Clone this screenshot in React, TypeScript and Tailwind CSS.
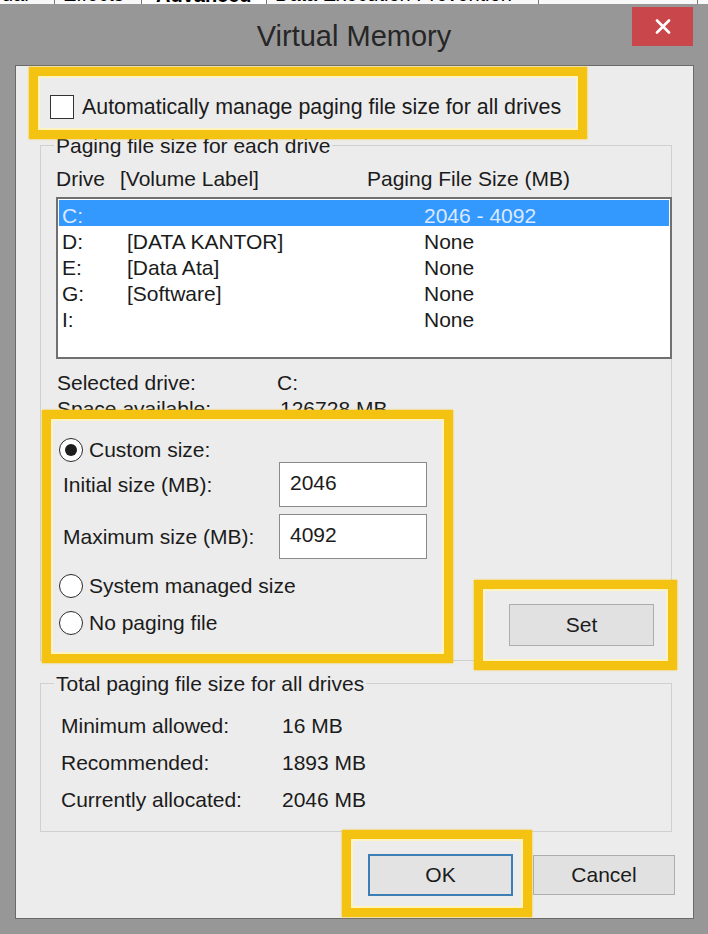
import React from "react";

const Yellow = ({ cls }: { cls: string }) => (
  <div
    className={
      "absolute pointer-events-none border-[9px] border-[#f4c211] shadow-[inset_0_0_0_2px_#fff3bf,0_0_2px_#f4c211] " +
      cls
    }
  />
);

const Radio = ({ checked }: { checked?: boolean }) => (
  <div className="w-[24px] h-[24px] rounded-full border-[1.5px] border-[#2a2a2a] bg-white flex items-center justify-center shrink-0">
    {checked && <div className="w-[12px] h-[12px] rounded-full bg-[#1e1e1e]" />}
  </div>
);

const drives = [
  { d: "C:", l: "", s: "2046 - 4092", sel: true },
  { d: "D:", l: "[DATA KANTOR]", s: "None" },
  { d: "E:", l: "[Data Ata]", s: "None" },
  { d: "G:", l: "[Software]", s: "None" },
  { d: "I:", l: "", s: "None" },
];

export default function App() {
  return (
    <div className="w-[708px] h-[934px] bg-[#979797] relative overflow-hidden font-['Liberation_Sans',Arial,sans-serif] text-[21px] text-[#1b1b1b]">
      {/* tab strip remnant */}
      <div className="h-[4px] bg-[#f8f8f8] flex overflow-hidden text-[20px] leading-[20px] text-black">
        <div className="w-[55px] shrink-0 border-r border-[#777]">
          <div className="-mt-[16px] pl-[2px] whitespace-nowrap">ual</div>
        </div>
        <div className="w-[87px] shrink-0 border-r border-[#777]">
          <div className="-mt-[16px] pl-[8px] whitespace-nowrap">Effects</div>
        </div>
        <div className="w-[125px] shrink-0 border-r border-[#777] bg-white">
          <div className="-mt-[15px] pl-[14px] whitespace-nowrap font-bold">Advanced</div>
        </div>
        <div className="w-[272px] shrink-0 border-r border-[#777]">
          <div className="-mt-[16px] pl-[8px] whitespace-nowrap">Data Execution Prevention</div>
        </div>
        <div className="w-[159px] shrink-0 border-r border-[#777]" />
        <div className="flex-1" />
      </div>

      {/* title bar */}
      <div className="grid grid-cols-[1fr_auto_1fr] h-[61px]">
        <div />
        <div className="mt-[15px] text-[29px] leading-[34px] text-[#262626]">Virtual Memory</div>
        <div className="flex justify-end">
          <div className="mt-[3px] mr-[15px] w-[61px] h-[39px] bg-[#c9474b] flex items-center justify-center">
            <svg width="16" height="15" viewBox="0 0 16 15">
              <path d="M2 1.5 L14 13.5 M14 1.5 L2 13.5" stroke="white" strokeWidth="2.6" strokeLinecap="round" />
            </svg>
          </div>
        </div>
      </div>

      {/* client area */}
      <div className="ml-[15px] w-[679px] h-[854px] border border-[#6a6a6a] bg-[#ececec] flex flex-col">
        <div className="h-[79px] pl-[34px] pt-[29px] flex items-start gap-[8px]">
          <div className="w-[24px] h-[24px] border border-[#333] bg-white" />
          <div className="leading-[24px] text-[21.4px]">Automatically manage paging file size for all drives</div>
        </div>

        {/* group 1 */}
        <div className="ml-[24px] w-[632px] h-[516px] border border-[#d0d0d0] flex flex-col">
          <div className="-mt-[13px] ml-[13px] self-start px-[2px] bg-[#ececec] h-[26px] leading-[26px]">
            Paging file size for each drive
          </div>
          <div className="mt-[7px] h-[26px] flex items-center pl-[15px]">
            <span className="w-[64px]">Drive</span>
            <span className="w-[247px]">[Volume Label]</span>
            <span>Paging File Size (MB)</span>
          </div>
          <div className="mt-[5px] ml-[15px] w-[616px] h-[162px] shrink-0 border-2 border-[#707070] bg-white pt-[1px] px-[1px]">
            {drives.map((r) => (
              <div
                key={r.d}
                className={
                  "grid grid-cols-[65px_297px_1fr] h-[26px] items-center pl-[3px] pb-[4px] " +
                  (r.sel ? "bg-[#3399ff] text-[#dbe9ff]" : "")
                }
              >
                <span>{r.d}</span>
                <span>{r.l}</span>
                <span>{r.s}</span>
              </div>
            ))}
          </div>
          <div className="mt-[8px] h-[26px] grid grid-cols-[220px_1fr] items-center pl-[16px] pb-[5px]">
            <span>Selected drive:</span>
            <span>C:</span>
          </div>
          <div className="h-[26px] grid grid-cols-[220px_1fr] items-center pl-[16px] pb-[5px]">
            <span>Space available:</span>
            <span className="pl-[3px]">126728 MB</span>
          </div>

          <div className="mt-[18px] flex justify-between flex-1">
            <div className="flex flex-col">
              <div className="h-[25px] flex items-center gap-[6px] pl-[18px]">
                <Radio checked />
                <span>Custom size:</span>
              </div>
              <div className="h-[45px] flex items-center pl-[22px]">
                <span className="w-[216px]">Initial size (MB):</span>
                <div className="w-[148px] h-[45px] bg-white border border-[#8a8a8a] pl-[10px] pb-[4px] flex items-center">
                  2046
                </div>
              </div>
              <div className="mt-[7px] h-[45px] flex items-center pl-[22px]">
                <span className="w-[216px]">Maximum size (MB):</span>
                <div className="w-[148px] h-[45px] bg-white border border-[#8a8a8a] pl-[10px] pb-[4px] flex items-center">
                  4092
                </div>
              </div>
              <div className="mt-[14px] h-[26px] flex items-center gap-[6px] pl-[18px]">
                <Radio />
                <span>System managed size</span>
              </div>
              <div className="mt-[11px] h-[26px] flex items-center gap-[6px] pl-[18px]">
                <Radio />
                <span>No paging file</span>
              </div>
            </div>
            <div className="self-end mr-[17px] mb-[14px] w-[145px] h-[42px] bg-[#e1e1e1] border border-[#adadad] flex items-center justify-center">
              Set
            </div>
          </div>
        </div>

        {/* group 2 */}
        <div className="mt-[22px] ml-[24px] w-[632px] h-[149px] border border-[#d0d0d0] flex flex-col">
          <div className="-mt-[13px] ml-[13px] self-start px-[2px] bg-[#ececec] h-[26px] leading-[26px]">
            Total paging file size for all drives
          </div>
          <div className="mt-[13px] flex flex-col gap-[11px] pl-[20px]">
            <div className="h-[26px] grid grid-cols-[221px_1fr] items-center pb-[5px]">
              <span>Minimum allowed:</span>
              <span>16 MB</span>
            </div>
            <div className="h-[26px] grid grid-cols-[221px_1fr] items-center pb-[5px]">
              <span>Recommended:</span>
              <span>1893 MB</span>
            </div>
            <div className="h-[26px] grid grid-cols-[221px_1fr] items-center pb-[5px]">
              <span>Currently allocated:</span>
              <span>2046 MB</span>
            </div>
          </div>
        </div>

        {/* buttons */}
        <div className="mt-[22px] flex justify-end items-center gap-[20px] pr-[18px]">
          <div className="w-[145px] h-[42px] bg-[#e3e3e3] border-2 border-[#3d7fb5] flex items-center justify-center">
            OK
          </div>
          <div className="w-[142px] h-[40px] bg-[#e1e1e1] border border-[#adadad] flex items-center justify-center">
            Cancel
          </div>
        </div>
      </div>

      <Yellow cls="left-[29px] top-[67px] w-[558px] h-[72px]" />
      <Yellow cls="left-[42px] top-[410px] w-[411px] h-[253px]" />
      <Yellow cls="left-[474px] top-[580px] w-[203px] h-[90px]" />
      <Yellow cls="left-[342px] top-[830px] w-[190px] h-[87px]" />
    </div>
  );
}
